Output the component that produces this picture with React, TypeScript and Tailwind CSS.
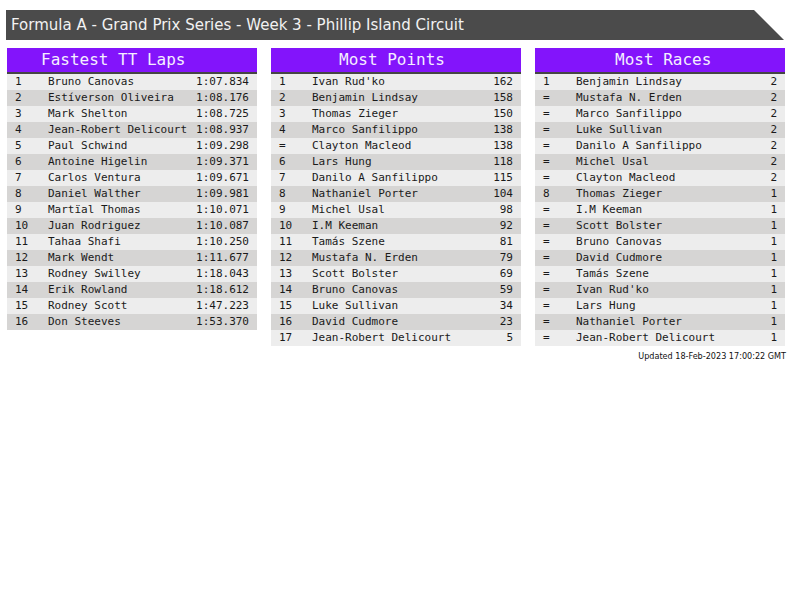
import React from 'react';

type Row = [string, string, string];

const fastestLaps: Row[] = [
  ['1', 'Bruno Canovas', '1:07.834'],
  ['2', 'Estíverson Oliveira', '1:08.176'],
  ['3', 'Mark Shelton', '1:08.725'],
  ['4', 'Jean-Robert Delicourt', '1:08.937'],
  ['5', 'Paul Schwind', '1:09.298'],
  ['6', 'Antoine Higelin', '1:09.371'],
  ['7', 'Carlos Ventura', '1:09.671'],
  ['8', 'Daniel Walther', '1:09.981'],
  ['9', 'Martïal Thomas', '1:10.071'],
  ['10', 'Juan Rodriguez', '1:10.087'],
  ['11', 'Tahaa Shafi', '1:10.250'],
  ['12', 'Mark Wendt', '1:11.677'],
  ['13', 'Rodney Swilley', '1:18.043'],
  ['14', 'Erik Rowland', '1:18.612'],
  ['15', 'Rodney Scott', '1:47.223'],
  ['16', 'Don Steeves', '1:53.370'],
];

const mostPoints: Row[] = [
  ['1', "Ivan Rud'ko", '162'],
  ['2', 'Benjamin Lindsay', '158'],
  ['3', 'Thomas Zieger', '150'],
  ['4', 'Marco Sanfilippo', '138'],
  ['=', 'Clayton Macleod', '138'],
  ['6', 'Lars Hung', '118'],
  ['7', 'Danilo A Sanfilippo', '115'],
  ['8', 'Nathaniel Porter', '104'],
  ['9', 'Michel Usal', '98'],
  ['10', 'I.M Keeman', '92'],
  ['11', 'Tamás Szene', '81'],
  ['12', 'Mustafa N. Erden', '79'],
  ['13', 'Scott Bolster', '69'],
  ['14', 'Bruno Canovas', '59'],
  ['15', 'Luke Sullivan', '34'],
  ['16', 'David Cudmore', '23'],
  ['17', 'Jean-Robert Delicourt', '5'],
];

const mostRaces: Row[] = [
  ['1', 'Benjamin Lindsay', '2'],
  ['=', 'Mustafa N. Erden', '2'],
  ['=', 'Marco Sanfilippo', '2'],
  ['=', 'Luke Sullivan', '2'],
  ['=', 'Danilo A Sanfilippo', '2'],
  ['=', 'Michel Usal', '2'],
  ['=', 'Clayton Macleod', '2'],
  ['8', 'Thomas Zieger', '1'],
  ['=', 'I.M Keeman', '1'],
  ['=', 'Scott Bolster', '1'],
  ['=', 'Bruno Canovas', '1'],
  ['=', 'David Cudmore', '1'],
  ['=', 'Tamás Szene', '1'],
  ['=', "Ivan Rud'ko", '1'],
  ['=', 'Lars Hung', '1'],
  ['=', 'Nathaniel Porter', '1'],
  ['=', 'Jean-Robert Delicourt', '1'],
];

const StatTable: React.FC<{ title: string; rows: Row[]; titleClass: string }> = ({ title, rows, titleClass }) => (
  <div className="w-[250px] font-['DejaVu_Sans_Mono',monospace]">
    <div className={`h-[26px] bg-[#8314fb] border-b-2 border-[#454545] text-[16px] leading-[24px] text-[#f4eeff] ${titleClass}`}>
      {title}
    </div>
    {rows.map((r, i) => (
      <div
        key={i}
        className={`flex h-[16px] items-center text-[11px] leading-[16px] text-[#1a1a1a] ${i % 2 === 0 ? 'bg-[#ededed]' : 'bg-[#d6d5d4]'}`}
      >
        <span className="w-[41px] pl-[8px] shrink-0">{r[0]}</span>
        <span className="flex-1 whitespace-nowrap">{r[1]}</span>
        <span className="pr-[8px] text-right">{r[2]}</span>
      </div>
    ))}
  </div>
);

const App: React.FC = () => {
  return (
    <div className="w-[800px] h-[600px] bg-white pt-[10px]">
      {/* Title banner with slanted right edge */}
      <div className="ml-[6px] w-[778px] h-[30px] bg-[#4b4b4b] [clip-path:polygon(0_0,748px_0,100%_100%,0_100%)] flex items-center pl-[5px]">
        <span className="font-['DejaVu_Sans',sans-serif] text-[15px] text-[#f2f2f2] whitespace-nowrap">
          Formula A - Grand Prix Series - Week 3 - Phillip Island Circuit
        </span>
      </div>

      <div className="flex gap-[14px] ml-[7px] mt-[8px] items-start">
        <StatTable title="Fastest TT Laps" rows={fastestLaps} titleClass="pl-[34px]" />
        <StatTable title="Most Points" rows={mostPoints} titleClass="pl-[68px]" />
        <div className="w-[250px]">
          <StatTable title="Most Races" rows={mostRaces} titleClass="pl-[80px]" />
          <div className="mt-[4px] -mr-[1px] text-right font-['DejaVu_Sans_Condensed',sans-serif] text-[9px] leading-[12px] text-[#111]">
            Updated 18-Feb-2023 17:00:22 GMT
          </div>
        </div>
      </div>
    </div>
  );
};

export default App;
